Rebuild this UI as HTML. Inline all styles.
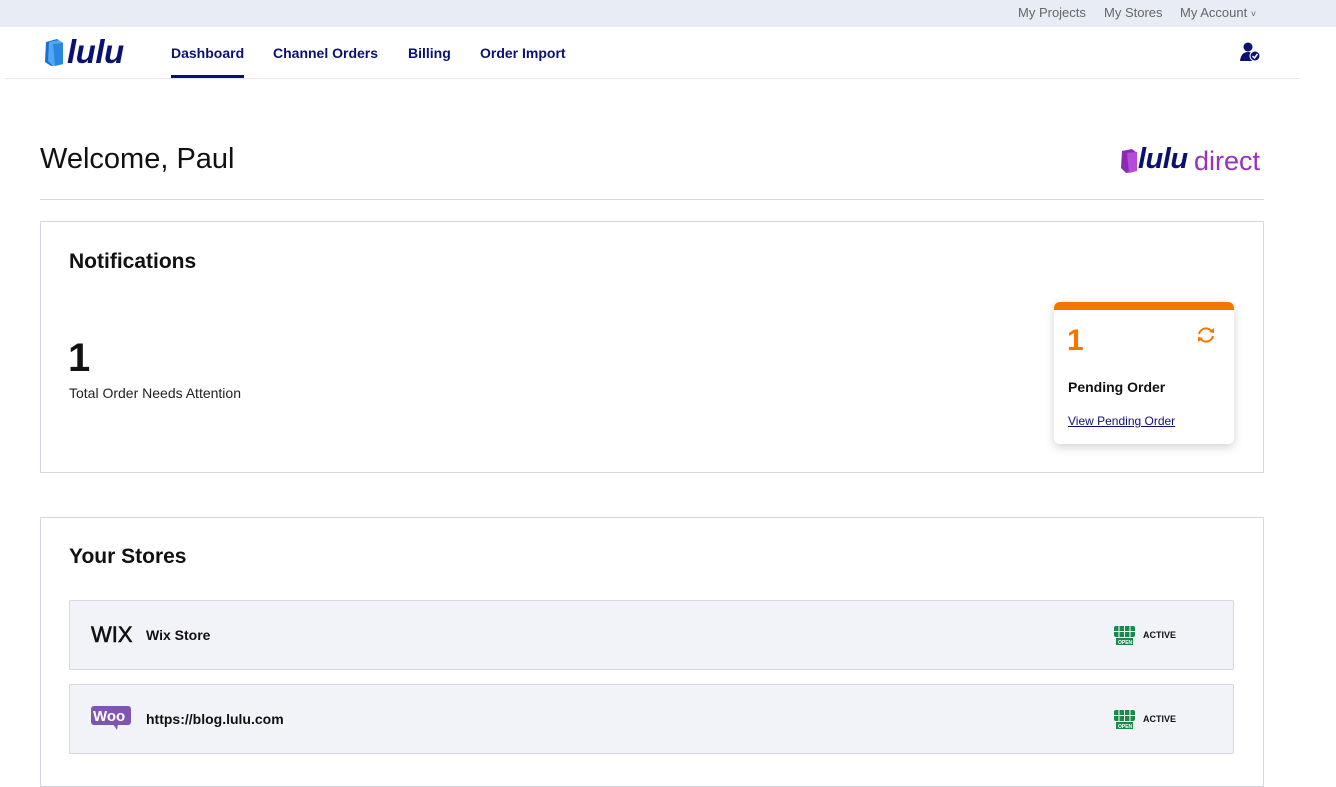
<!DOCTYPE html>
<html><head><style>
*{margin:0;padding:0;box-sizing:border-box}
body{width:1336px;height:775px;overflow:hidden;background:#fff;font-family:"Liberation Sans",sans-serif;color:#111;position:relative}
.a{position:absolute}
.top{left:0;top:0;width:1336px;height:27px;background:#e8ecf4;font-size:13px;color:#666}
.nav{font-size:14px;font-weight:bold;color:#0a1172;top:45px}
.box{border:1px solid #d6d6de;background:#fff}
.store{left:69px;width:1165px;height:70px;background:#f2f3f8;border:1px solid #d6d6e2;border-radius:2px}
.act{font-size:9px;font-weight:bold;color:#111}
</style></head><body>
<div class="a top">
<span class="a" style="left:1018px;top:5px">My Projects</span>
<span class="a" style="left:1104px;top:5px">My Stores</span>
<span class="a" style="left:1180px;top:5px">My Account <span style="font-size:9px">˅</span></span>
</div>
<svg class="a" style="left:43px;top:38px" width="26" height="30" viewBox="0 0 26 30"><path d="M3 4 L14 1 L20 5 L20 26 L8 28 L2 24Z" fill="#1a6fd0"/><path d="M6 4 L16 2 L20 6 L20 26 L10 28 L5 23Z" fill="#52a8ee"/><path d="M10 6 L20 5 L20 26 L12 28Z" fill="#2a86e0"/></svg>
<span class="a" style="left:67px;top:33px;font-size:33px;font-weight:bold;font-style:italic;color:#0a1172;letter-spacing:-0.5px">lulu</span>
<span class="a nav" style="left:171px">Dashboard</span>
<div class="a" style="left:171px;top:75px;width:73px;height:3px;background:#0a1172"></div>
<span class="a nav" style="left:273px">Channel Orders</span>
<span class="a nav" style="left:408px">Billing</span>
<span class="a nav" style="left:480px">Order Import</span>
<svg class="a" style="left:1240px;top:42px" width="21" height="20" viewBox="0 0 21 20"><circle cx="8" cy="5" r="4.5" fill="#0a1172"/><path d="M0 19 Q1 10 8 10 Q15 10 16 19Z" fill="#0a1172"/><circle cx="15" cy="14" r="5" fill="#0a1172" stroke="#fff" stroke-width="1"/><path d="M12.5 14 L14.5 16 L17.5 12" stroke="#fff" stroke-width="1.5" fill="none"/></svg>
<div class="a" style="left:5px;top:78px;width:1295px;height:1px;background:#e6e9f0"></div>

<span class="a" style="left:40px;top:143px;font-size:29px;color:#111">Welcome, Paul</span>
<svg class="a" style="left:1120px;top:148px" width="20" height="26" viewBox="0 0 20 26"><path d="M2 3 L12 1 L17 5 L17 23 L6 25 L1 20Z" fill="#8a2bb8"/><path d="M7 5 L17 4 L17 23 L9 25Z" fill="#b84ad8"/></svg>
<span class="a" style="left:1138px;top:143px;font-size:29px;font-weight:bold;font-style:italic;color:#0a1172;letter-spacing:-0.5px">lulu</span>
<span class="a" style="left:1194px;top:146px;font-size:27px;color:#9b2fbf">direct</span>
<div class="a" style="left:40px;top:199px;width:1224px;height:1px;background:#d6d6de"></div>

<div class="a box" style="left:40px;top:221px;width:1224px;height:252px"></div>
<span class="a" style="left:69px;top:250px;font-size:21px;font-weight:bold">Notifications</span>
<span class="a" style="left:68px;top:336px;font-size:40px;font-weight:bold">1</span>
<span class="a" style="left:69px;top:385px;font-size:14px;color:#222">Total Order Needs Attention</span>
<div class="a" style="left:1054px;top:302px;width:180px;height:142px;border-radius:6px;background:#fff;box-shadow:0 3px 10px rgba(0,0,0,.18);overflow:hidden">
<div style="height:8px;background:#f57500"></div>
<span class="a" style="left:13px;top:22px;font-size:30px;font-weight:bold;color:#f57500">1</span>
<svg class="a" style="left:142px;top:24px" width="20" height="18" viewBox="0 0 20 18"><path d="M3 8 A7 7 0 0 1 16 6" stroke="#f57500" stroke-width="2" fill="none"/><path d="M17 10 A7 7 0 0 1 4 12" stroke="#f57500" stroke-width="2" fill="none"/><path d="M13 6 L18 7 L18 2Z M7 12 L2 11 L2 16Z" fill="#f57500"/></svg>
<span class="a" style="left:14px;top:77px;font-size:14px;font-weight:bold">Pending Order</span>
<span class="a" style="left:14px;top:112px;font-size:12px;color:#0a1172;text-decoration:underline">View Pending Order</span>
</div>

<div class="a box" style="left:40px;top:517px;width:1224px;height:270px"></div>
<span class="a" style="left:69px;top:545px;font-size:21px;font-weight:bold">Your Stores</span>
<div class="a store" style="top:600px"></div>
<span class="a" style="left:91px;top:622px;font-size:22px;color:#111;letter-spacing:0px;-webkit-text-stroke:0.6px #111">WIX</span>
<span class="a" style="left:146px;top:627px;font-size:14px;font-weight:bold">Wix Store</span>
<div class="a store" style="top:684px"></div>
<svg class="a" style="left:91px;top:706px" width="41" height="25" viewBox="0 0 41 25"><rect x="0" y="0" width="40" height="19" rx="3" fill="#7f54b3"/><path d="M22 18 L26 24 L27 18Z" fill="#7f54b3"/><text x="2" y="15" font-family="Liberation Sans" font-weight="bold" font-size="15" fill="#fff">Woo</text></svg>
<span class="a" style="left:146px;top:711px;font-size:14px;font-weight:bold">https://blog.lulu.com</span>
<svg class="a" style="left:1114px;top:626px" width="21" height="19" viewBox="0 0 21 19"><rect x="0" y="0" width="21" height="11" rx="2" fill="#1a8a4a"/><path d="M5 0V11M10.5 0V11M16 0V11M0 5.5H21" stroke="#fff" stroke-width="1"/><rect x="2" y="12" width="17" height="7" fill="#1a8a4a"/><text x="4" y="18" font-size="5" fill="#fff" font-family="Liberation Sans" font-weight="bold">OPEN</text></svg>
<span class="a act" style="left:1143px;top:630px">ACTIVE</span>
<svg class="a" style="left:1114px;top:710px" width="21" height="19" viewBox="0 0 21 19"><rect x="0" y="0" width="21" height="11" rx="2" fill="#1a8a4a"/><path d="M5 0V11M10.5 0V11M16 0V11M0 5.5H21" stroke="#fff" stroke-width="1"/><rect x="2" y="12" width="17" height="7" fill="#1a8a4a"/><text x="4" y="18" font-size="5" fill="#fff" font-family="Liberation Sans" font-weight="bold">OPEN</text></svg>
<span class="a act" style="left:1143px;top:714px">ACTIVE</span>
</body></html>
